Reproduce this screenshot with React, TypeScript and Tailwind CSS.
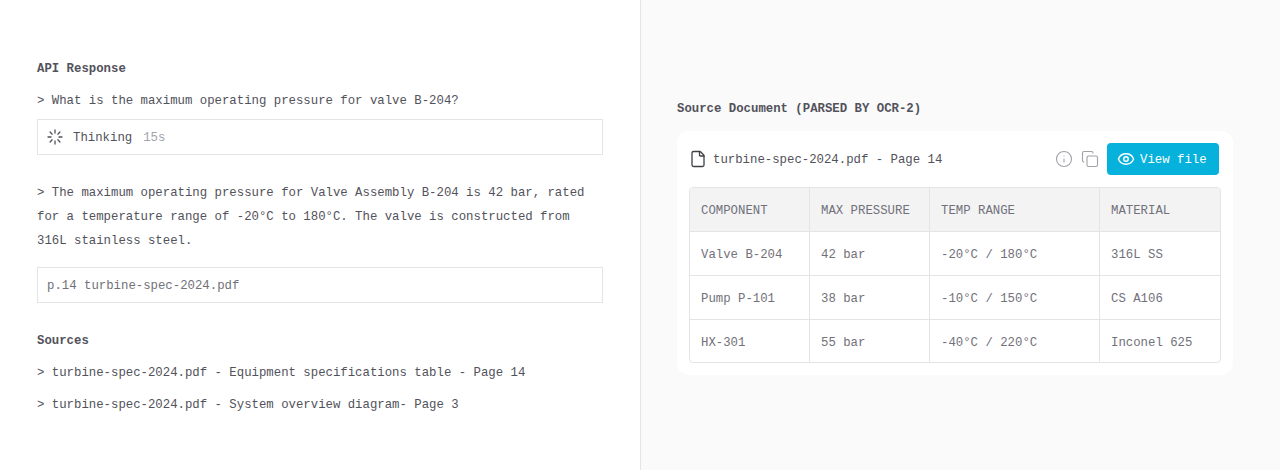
import { Eye, File, Info, Copy } from "lucide-react";

const rows = [
  ["Valve B-204", "42 bar", "-20°C / 180°C", "316L SS"],
  ["Pump P-101", "38 bar", "-10°C / 150°C", "CS A106"],
  ["HX-301", "55 bar", "-40°C / 220°C", "Inconel 625"],
];

const headers = ["COMPONENT", "MAX PRESSURE", "TEMP RANGE", "MATERIAL"];

function Spinner() {
  const lines = [0, 45, 90, 135, 180, 225, 270, 315];
  return (
    <svg width="16" height="16" viewBox="0 0 16 16" className="text-[#52525b]">
      {lines.map((a) => (
        <line
          key={a}
          x1="8"
          y1="1"
          x2="8"
          y2="4"
          stroke="currentColor"
          strokeWidth="1.3"
          strokeLinecap="round"
          transform={`rotate(${a} 8 8)`}
        />
      ))}
    </svg>
  );
}

function App() {
  return (
    <div className="flex h-[470px] w-[1280px] overflow-hidden bg-white font-['Liberation_Mono',monospace] text-[12.33px] text-[#52525b]">
      <div className="flex w-[641px] flex-col border-r border-[#e4e4e7] px-[37px] pt-[60px]">
        <h2 className="h-[18px] font-bold leading-[18px]">API Response</h2>
        <p className="mt-[14px] h-[18px] leading-[18px]">&gt; What is the maximum operating pressure for valve B-204?</p>
        <div className="mt-[9px] flex h-[36px] items-center border border-[#e4e4e7] pl-[9px]">
          <Spinner />
          <span className="ml-[10px] pt-[2px]">Thinking</span>
          <span className="ml-[11px] pt-[2px] text-[#a1a1aa]">15s</span>
        </div>
        <p className="mt-[26px] leading-[24px]">
          &gt; The maximum operating pressure for Valve Assembly B-204 is 42 bar, rated
          <br />
          for a temperature range of -20°C to 180°C. The valve is constructed from
          <br />
          316L stainless steel.
        </p>
        <div className="mt-[14px] flex h-[36px] items-center border border-[#e4e4e7] pl-[9px] pt-[2px] text-[#71717a]">
          p.14 turbine-spec-2024.pdf
        </div>
        <h2 className="mt-[29px] h-[18px] font-bold leading-[18px]">Sources</h2>
        <p className="mt-[14px] h-[18px] leading-[18px]">&gt; turbine-spec-2024.pdf - Equipment specifications table - Page 14</p>
        <p className="mt-[14px] h-[18px] leading-[18px]">&gt; turbine-spec-2024.pdf - System overview diagram- Page 3</p>
      </div>

      <div className="flex flex-1 flex-col bg-[#fafafa] pl-[36px] pr-[47px] pt-[100px]">
        <h2 className="h-[18px] font-bold leading-[18px]">Source Document (PARSED BY OCR-2)</h2>
        <div className="mt-[13px] rounded-xl bg-white p-[12px]">
          <div className="flex h-[32px] items-center pr-[2px]">
            <File size={18} strokeWidth={1.75} className="text-[#3f3f46]" />
            <span className="ml-[6px] pt-[2px]">turbine-spec-2024.pdf - Page 14</span>
            <div className="ml-auto flex items-center">
              <Info size={18} strokeWidth={1.5} className="text-[#a1a1aa]" />
              <Copy size={18} strokeWidth={1.5} className="ml-[8px] text-[#a1a1aa]" />
              <button className="ml-[8px] flex h-[32px] w-[112px] items-center gap-[5px] rounded bg-[#06b2dc] pl-[10px] text-white">
                <Eye size={18} strokeWidth={2} />
                <span className="pt-[2px]">View file</span>
              </button>
            </div>
          </div>
          <div className="mt-[12px] overflow-hidden rounded border border-[#e4e4e7]">
            <div className="grid h-[43px] grid-cols-[120px_120px_170px_1fr] bg-[#f3f3f4] text-[#71717a]">
              {headers.map((h, i) => (
                <div key={h} className={`flex items-center pl-[11px] pt-[3px] ${i < 3 ? "border-r border-[#e4e4e7]" : ""}`}>
                  {h}
                </div>
              ))}
            </div>
            {rows.map((row, r) => (
              <div
                key={row[0]}
                className={`grid grid-cols-[120px_120px_170px_1fr] border-t border-[#e4e4e7] text-[#71717a] ${r === 2 ? "h-[43px]" : "h-[44px]"}`}
              >
                {row.map((cell, i) => (
                  <div
                    key={cell}
                    className={`flex items-center pl-[11px] ${r === 2 ? "pt-[4px]" : "pt-[3px]"} ${i < 3 ? "border-r border-[#e4e4e7]" : ""}`}
                  >
                    {cell}
                  </div>
                ))}
              </div>
            ))}
          </div>
        </div>
      </div>
    </div>
  );
}

export default App;
